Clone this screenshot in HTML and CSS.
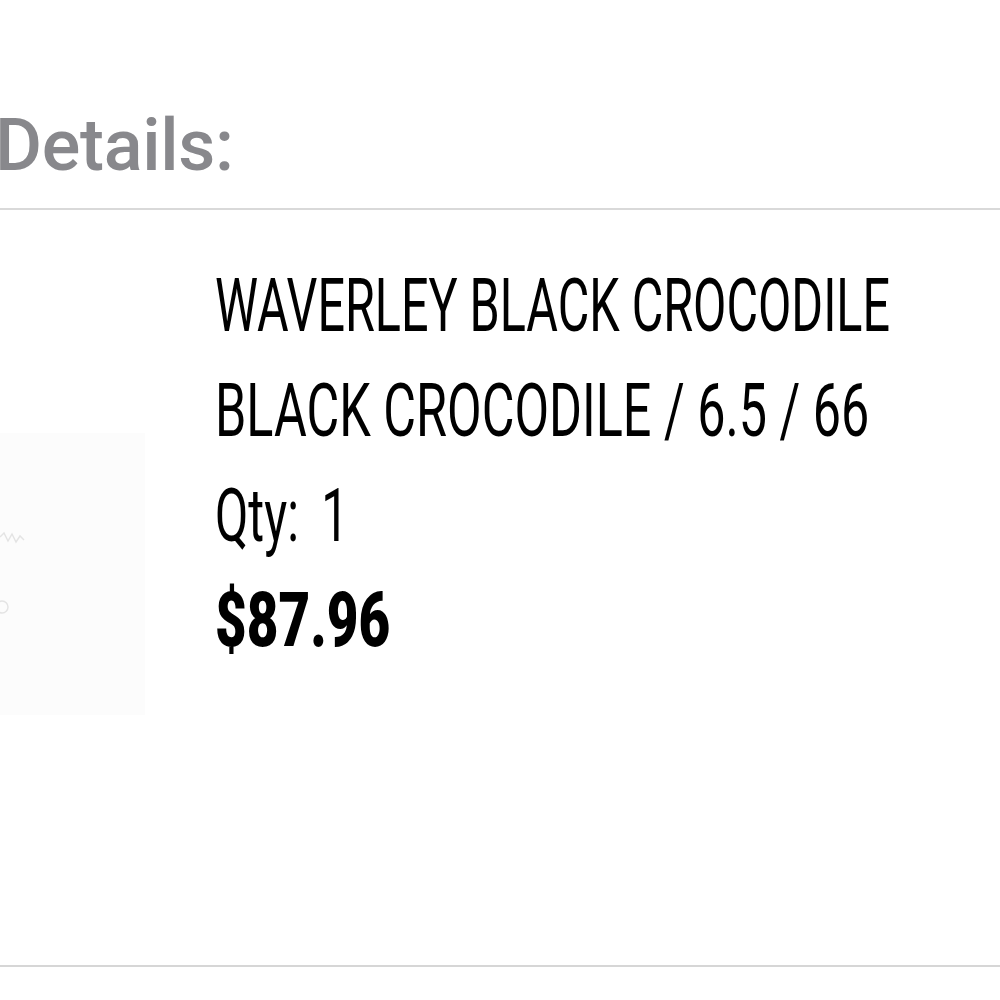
FILE: index.html
```html
<!DOCTYPE html>
<html>
<head>
<meta charset="utf-8">
<link rel="stylesheet" href="styles.css">
</head>
<body>
<div class="page">
  <div class="header">
    <h2 class="title">Details:</h2>
  </div>
  <div class="item">
    <div class="thumb">
      <svg class="thumb-art" width="145" height="282" viewBox="0 0 145 282">
        <path d="M0 104 L4 100 L8 108 L12 101 L16 109 L20 103 L24 107" fill="none" stroke="#e4e4e4" stroke-width="1.5"/>
        <circle cx="2" cy="174" r="6" fill="none" stroke="#e4e4e4" stroke-width="1.5"/>
      </svg>
    </div>
    <div class="info">
      <div class="line"><span class="cond">WAVERLEY BLACK CROCODILE</span></div>
      <div class="line"><span class="cond cond-wide">BLACK CROCODILE / 6.5 / 66</span></div>
      <div class="line"><span class="cond qty">Qty:<span class="qty-num">1</span></span></div>
      <div class="line"><span class="cond price">$87.96</span></div>
    </div>
  </div>
</div>
</body>
</html>
```

FILE: styles.css
```css
html, body {
  margin: 0;
  padding: 0;
  background: #ffffff;
}

.page {
  width: 1000px;
  height: 1000px;
  overflow: hidden;
}

.header {
  padding-top: 109px;
  padding-bottom: 26px;
  border-bottom: 2px solid #d9d9d9;
}

.title {
  margin: 0 0 0 -5px;
  font-family: "Roboto", "Liberation Sans", sans-serif;
  font-weight: 500;
  font-size: 72px;
  line-height: 73px;
  color: #88888c;
  letter-spacing: -0.3px;
}

.item {
  display: flex;
  height: 755px;
  border-bottom: 2px solid #d6d6d6;
}

.thumb {
  flex: 0 0 145px;
  height: 282px;
  margin-top: 223px;
  background: #fcfcfc;
}

.thumb-art {
  display: block;
}

.info {
  margin-left: 70px;
  padding-top: 43px;
  font-family: "Roboto", "Liberation Sans", sans-serif;
  font-size: 74px;
  line-height: 105px;
  color: #000;
}

.line {
  height: 105px;
  white-space: nowrap;
}

.cond {
  display: inline-block;
  transform: scaleX(0.655);
  transform-origin: left center;
  font-weight: 400;
}

.cond-wide {
  transform: scaleX(0.68);
}

.qty-num {
  margin-left: 34px;
}

.price {
  font-weight: 900;
  font-size: 76px;
  transform: scaleX(0.72);
}
```
